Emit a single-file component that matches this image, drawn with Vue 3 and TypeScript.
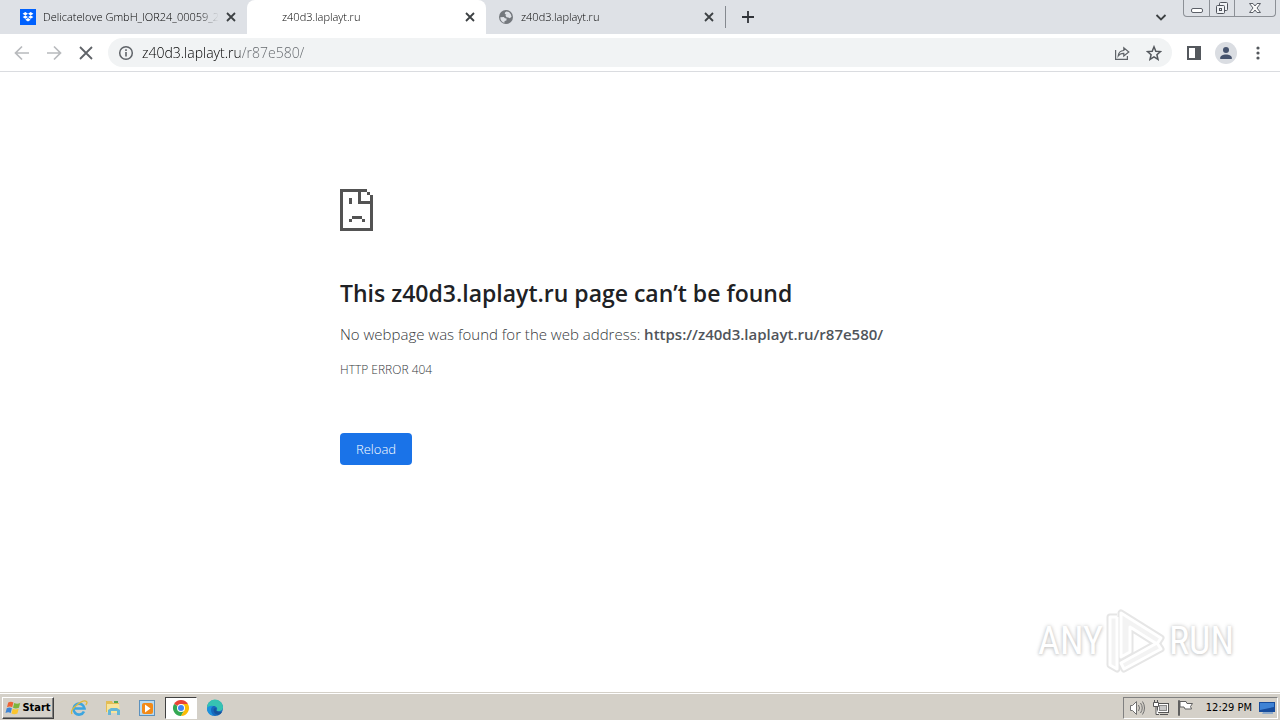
<script setup lang="ts">
import { ref } from 'vue'

interface Tab {
  title: string
  icon: 'dropbox' | 'globe' | 'none'
  active: boolean
}

const tabs: Tab[] = [
  { title: 'Delicatelove GmbH_IOR24_00059_2', icon: 'dropbox', active: false },
  { title: 'z40d3.laplayt.ru', icon: 'none', active: true },
  { title: 'z40d3.laplayt.ru', icon: 'globe', active: false },
]

const address = ref('z40d3.laplayt.ru/r87e580/')
</script>

<template>
  <div class="screen">
    <header class="strip">
      <nav class="tabs" aria-label="Tabs">
        <div v-for="(tab, i) in tabs" :key="i" class="tab" :class="{ active: tab.active }">
          <svg v-if="tab.icon === 'dropbox'" class="favicon" viewBox="0 0 16 16">
            <rect width="16" height="16" fill="#0061fe" />
            <path fill="#fff" d="M5.3 3 8 4.7 5.3 6.4 2.6 4.7zM10.7 3l2.7 1.7-2.7 1.7L8 4.7zM5.3 6.4 8 8.1 5.3 9.8 2.6 8.1zM10.7 6.4l2.7 1.7-2.7 1.7L8 8.1zM8 9l2.7 1.8L8 12.6l-2.7-1.8z" />
          </svg>
          <svg v-else-if="tab.icon === 'globe'" class="favicon" viewBox="0 0 16 16">
            <circle cx="8" cy="8" r="7" fill="#74787d" />
            <path fill="#dee1e6" d="M2.3 8.2 5.8 8 7 9.2l1.6.2-.2 2-1.8.6-.2 1.8C4 13.2 2.2 11 2.3 8.2zM8.4 2.4 11 3l1.8 2.2.8 2.6-1.8 1.4-1.6-.8-1.6-.2-1.2-1.6 1-.9-1.6-.6.2-1.5z" />
          </svg>
          <span v-else class="favicon"></span>
          <span class="title">{{ tab.title }}</span>
          <button class="close" aria-label="Close tab">
            <svg viewBox="0 0 16 16"><path d="m4 4 8 8m0-8-8 8" stroke="#3c4043" stroke-width="1.8" /></svg>
          </button>
        </div>
      </nav>
      <button class="new-tab" aria-label="New tab">
        <svg viewBox="0 0 16 16"><path d="M8 2v12M2 8h12" stroke="#303338" stroke-width="1.8" /></svg>
      </button>
      <button class="search-tabs" aria-label="Search tabs">
        <svg viewBox="0 0 16 16"><path d="M3.5 6 8 10.5 12.5 6" fill="none" stroke="#3c4043" stroke-width="1.8" /></svg>
      </button>
      <div class="window-controls">
        <button aria-label="Minimize">
          <svg viewBox="0 0 16 16"><rect x="2.5" y="8.5" width="11" height="4" rx="1.5" fill="#fff" stroke="#5c6068" /></svg>
        </button>
        <button aria-label="Restore">
          <svg viewBox="0 0 16 16" fill="#f0f2f5" stroke="#50545c">
            <rect x="5.5" y="2.5" width="8" height="8" rx="1" />
            <rect x="2.5" y="5.5" width="8" height="8" rx="1" />
            <rect x="5.5" y="8.5" width="2" height="2" />
          </svg>
        </button>
        <button aria-label="Close">
          <svg viewBox="0 0 16 16"><path d="M2.5 3.5H6L8 6l2-2.500h3.500L10 8l3.500 4.500H10L8 10l-2 2.500H2.500L6 8z" fill="#fafafa" stroke="#5c6068" /></svg>
        </button>
      </div>
    </header>

    <div class="toolbar">
      <button class="nav" aria-label="Back">
        <svg viewBox="0 0 16 16"><path d="M15 8H2M8 1.500 1.500 8 8 14.500" fill="none" stroke="#b8babd" stroke-width="1.7" /></svg>
      </button>
      <button class="nav" aria-label="Forward">
        <svg viewBox="0 0 16 16"><path d="M1 8h13M8 1.500 14.500 8 8 14.500" fill="none" stroke="#b8babd" stroke-width="1.7" /></svg>
      </button>
      <button class="nav" aria-label="Stop loading">
        <svg viewBox="0 0 16 16"><path d="m2 2 12 12m0-12L2 14" stroke="#5f6368" stroke-width="1.8" /></svg>
      </button>
      <div class="omnibox">
        <button class="inner" aria-label="Site information">
          <svg viewBox="0 0 16 16"><circle cx="8" cy="8" r="6.3" fill="none" stroke="#5f6368" stroke-width="1.5" /><path d="M8 7v4.500M8 4.200v1.700" stroke="#5f6368" stroke-width="1.6" /></svg>
        </button>
        <input v-model="address" class="address" type="text" aria-label="Address" spellcheck="false" />
        <button class="inner" aria-label="Share">
          <svg viewBox="0 0 16 16" fill="none" stroke="#5f6368" stroke-width="1.2"><path d="M1.600 5v9.400h11.800V11" /><path d="M4.200 11c.3-3.500 2-5.300 5.600-5.500V2.700L14.800 7l-5 4V8.300C7.300 8.200 5.600 9 4.200 11z" /></svg>
        </button>
        <button class="inner" aria-label="Bookmark this page">
          <svg viewBox="0 0 16 16"><path d="m8 1.800 1.800 4.400 4.700.4-3.600 3.100 1.100 4.600L8 11.800l-4 2.500 1.100-4.600L1.500 6.600l4.700-.4z" fill="none" stroke="#54585d" stroke-width="1.5" /></svg>
        </button>
      </div>
      <button class="tool" aria-label="Side panel">
        <svg viewBox="0 0 16 16"><path d="M1 1h14v14H1zM3 3v10h6V3z" fill="#54585d" fill-rule="evenodd" /></svg>
      </button>
      <button class="tool profile" aria-label="Profile">
        <svg viewBox="0 0 16 16" fill="#46536d"><circle cx="8" cy="5" r="3" /><path d="M2 13.500c0-5.500 12-5.500 12 0v.5H2z" /></svg>
      </button>
      <button class="tool" aria-label="Menu">
        <svg viewBox="0 0 16 16" fill="#54585d"><circle cx="8" cy="3" r="1.6" /><circle cx="8" cy="8" r="1.6" /><circle cx="8" cy="13" r="1.6" /></svg>
      </button>
    </div>

    <main class="page">
      <section class="error">
        <svg class="sad" viewBox="0 0 33 42" fill="#535353" shape-rendering="crispEdges">
          <path d="M0 0h27v3H3v36h27V15H18V3h3v9h9V9h3v33H0zM27 3h3v3h-3zM30 6h3v3h-3zM9 9h3v6H9zM12 27h10v3H12zM9 30h3v3H9zM22 30h3v3h-3z" />
        </svg>
        <h1>This z40d3.laplayt.ru page can’t be found</h1>
        <p class="detail">No webpage was found for the web address: <strong>https://z40d3.laplayt.ru/r87e580/</strong></p>
        <p class="code">HTTP ERROR 404</p>
        <button class="reload">Reload</button>
      </section>

      <div class="watermark">
        <span>ANY</span>
        <svg viewBox="0 0 60 64" fill="none" stroke-linejoin="round">
          <g stroke="#e6e6e6" stroke-width="7">
            <path d="M11 8H4v48l7 4V8" /><path d="M15 4v44l9-5V18l27 17 4-6z" /><path d="m15 54 36-20 4 6-37 20z" />
          </g>
          <g stroke="#fff" fill="#f3f3f3" stroke-width="3">
            <path d="M11 8H4v48l7 4V8" /><path d="M15 4v44l9-5V18l27 17 4-6z" /><path d="m15 54 36-20 4 6-37 20z" />
          </g>
        </svg>
        <span>RUN</span>
      </div>
    </main>

    <footer class="taskbar">
      <button class="start">
        <svg viewBox="0 0 16 16">
          <path d="M3.200 2.500c2-1 3.500-1 5.200 0L7.200 7.300c-1.700-1-3.200-1-5.200 0z" fill="#ed6335" />
          <path d="M9.200 3c2 1 3.700 1 6 0l-1.300 4.800c-2.200 1-4 1-5.900 0z" fill="#7db53c" />
          <path d="M1.700 8.200c2-1 3.600-1 5.200 0L5.700 13c-1.700-1-3.200-1-5.200 0z" fill="#3d85d6" />
          <path d="M7.700 8.700c2 1 3.700 1 6 0l-1.300 4.800c-2.200 1-4 1-5.900 0z" fill="#fbc52e" />
        </svg>
        Start
      </button>
      <div class="launch">
        <button aria-label="Internet Explorer">
          <svg viewBox="0 0 18 18" fill="none"><path d="M14 12.500A5.500 5.500 0 1 1 14.500 9.500H5" stroke="#3da5df" stroke-width="2.6" /><path d="M2 15C-1 10 13 0 16.500 2.500c1 .8.300 2.200-.7 3.500" stroke="#dfb83a" stroke-width="1.3" /></svg>
        </button>
        <button aria-label="File Explorer">
          <svg viewBox="0 0 18 18"><path d="M2 2h6l1 2h6v9H2z" fill="#e3bd55" /><path d="M3 5h12l1 9H3z" fill="#f8e49b" /><path d="M4 16v-5l3-2h6l3 2v5h-3v-4H7v4z" fill="#65b6d6" /><path d="M10 3h4" stroke="#56a64f" stroke-width="2" /></svg>
        </button>
        <button aria-label="Media Player">
          <svg viewBox="0 0 18 18"><rect x="1.5" y="1.5" width="15" height="15" fill="#b8daf1" stroke="#5c91bd" /><rect x="4" y="4" width="11" height="11" rx="2" fill="#f28a18" /><path d="m7 5.500 5.500 4L7 13.500z" fill="#fff" /></svg>
        </button>
        <button class="current" aria-label="Chrome">
          <svg viewBox="0 0 18 18"><path d="M9 9 2.070 5A8 8 0 0 1 15.930 5z" fill="#ea4335" /><path d="M9 9 2.070 5A8 8 0 0 0 9 17l3-5z" fill="#34a853" /><path d="M9 9V5h6.930A8 8 0 0 1 9 17l3.400-6z" fill="#fbbc05" /><circle cx="9" cy="9" r="4" fill="#fff" /><circle cx="9" cy="9" r="3" fill="#4285f4" /></svg>
        </button>
        <button aria-label="Edge">
          <svg viewBox="0 0 18 18"><circle cx="9" cy="9" r="8" fill="#1769bd" /><path d="M1 9a8 8 0 0 1 16-1c.3 4-4.500 5-6.500 3.500 2-2-.5-5-3.500-4.500-3 .3-5 2-6 2z" fill="#36c3b2" /><path d="M7 7c-3 2-2.500 7 1 9.500C4 17 .5 13 1 9c1.500-2 4-2.500 6-2z" fill="#1e91dc" /><path d="M10.500 9c-2 1.500 0 4.500 5.500 4-1 2-3 3-5 2.500-3-.7-4-4-3-6z" fill="#17549b" /></svg>
        </button>
      </div>
      <div class="tray">
        <button aria-label="Volume">
          <svg viewBox="0 0 18 18" fill="none" stroke="#707070"><path d="M2.500 6.500h2l4-4v13l-4-4h-2z" fill="#fff" /><path d="M10.500 6q2 3 0 6M12.500 4q3.500 5 0 10M14.500 2.500q4 6.500 0 13" /></svg>
        </button>
        <button aria-label="Network">
          <svg viewBox="0 0 18 18" stroke="#555" fill="#fff"><rect x="5.5" y="4.5" width="11" height="9" /><rect x="7.5" y="6.5" width="7" height="5" fill="#c8c8c8" stroke="#888" /><path d="M8 15.500h8M2.500 1v3M5.500 1v3M1.500 3.500h5v4h-5zM4 8v7.500h3" /></svg>
        </button>
        <button aria-label="Action Center">
          <svg viewBox="0 0 18 18" stroke="#606060" fill="#fff"><path d="M2.500 1.500v15h1v-15zM4 2.500h6l1 2h5.500l-2 3 1 2.500H9l-1-2H4z" /></svg>
        </button>
        <time>12:29 PM</time>
        <button aria-label="Show desktop">
          <svg viewBox="0 0 18 18"><path d="M1 3h16v10H1z" fill="#174c9c" /><path d="M2 4h14v4L2 11z" fill="#3f83d5" /><path d="M5 13h10v2H4z" fill="#8daacb" /></svg>
        </button>
      </div>
    </footer>
  </div>
</template>

<style>
body {
  margin: 0;
}
</style>

<style scoped>
* {
  box-sizing: border-box;
}
.screen {
  display: flex;
  flex-direction: column;
  min-height: 100vh;
  background: #fff;
  font-family: "DejaVu Sans Condensed", "Noto Sans", sans-serif;
  color: #3c4043;
}
button {
  display: flex;
  align-items: center;
  justify-content: center;
  flex: none;
  padding: 0;
  border: 0;
  background: none;
  font: inherit;
  color: inherit;
}
svg {
  display: block;
  flex: none;
  width: 16px;
  height: 16px;
}
.strip {
  display: flex;
  height: 34px;
  background: #dee1e6;
}
.tabs {
  display: flex;
  flex: 0 1 726px;
  min-width: 0;
  border-right: 1px solid #85898f;
  border-image: linear-gradient(transparent 7px, #85898f 7px, #85898f 27px, transparent 27px) 1;
}
.tab {
  display: flex;
  align-items: center;
  flex: 1 1 0;
  min-width: 0;
  padding: 0 8px 0 12px;
  color: #000;
  font-family: "Open Sans", "Noto Sans", sans-serif;
  font-size: 11px;
  font-weight: 300;
}
.tab:first-child {
  flex-basis: 8px;
  padding-left: 20px;
}
.tab.active {
  border-radius: 8px 8px 0 0;
  background: #fff;
}
.favicon {
  flex: none;
  width: 16px;
  height: 16px;
}
.title {
  flex: 1;
  min-width: 0;
  margin: 0 4px 0 7px;
  overflow: hidden;
  white-space: nowrap;
  line-height: 18px;
  mask-image: linear-gradient(to left, transparent, #000 20px);
}
.new-tab {
  width: 44px;
}
.search-tabs {
  width: 28px;
  margin-left: auto;
}
.window-controls {
  display: flex;
  height: 17px;
  margin: 0 4px 0 8px;
  border: 1px solid #8c9096;
  border-top: 0;
  border-radius: 0 0 4px 4px;
}
.window-controls button {
  width: 25px;
}
.window-controls button + button {
  border-left: 1px solid #8c9096;
}
.window-controls button:last-child {
  width: 41px;
}
.toolbar {
  display: flex;
  align-items: center;
  height: 38px;
  padding: 0 6px;
  border-bottom: 1px solid #dadce0;
}
.nav {
  width: 32px;
  height: 32px;
}
.omnibox {
  display: flex;
  align-items: center;
  flex: 1;
  min-width: 0;
  height: 29px;
  margin: 0 6px;
  padding: 0 2px;
  border-radius: 15px;
  background: #f1f3f4;
}
.inner {
  width: 32px;
  height: 28px;
}
.address {
  flex: 1;
  min-width: 0;
  height: 28px;
  padding: 0;
  border: 0;
  outline: 0;
  background: linear-gradient(to right, #000 7em, #5f6368 7em);
  background-clip: text;
  color: transparent;
  caret-color: #202124;
  font: 300 14px/28px "Open Sans", "Noto Sans", sans-serif;
}
.tool {
  width: 32px;
  height: 32px;
}
.profile svg {
  width: 22px;
  height: 22px;
  padding: 3px;
  border-radius: 50%;
  background: #dadde2;
}
.page {
  display: flex;
  flex-direction: column;
  justify-content: space-between;
  flex: 1;
}
.error {
  width: 100%;
  max-width: 600px;
  margin: 0 auto;
  padding-top: 117px;
  color: #36393c;
  font-family: "Open Sans", "Noto Sans", sans-serif;
  font-weight: 300;
}
.sad {
  width: 33px;
  height: 42px;
}
h1 {
  margin: 48px 0 0;
  color: #202124;
  font-size: 23px;
  font-weight: 600;
  line-height: 28px;
}
.detail {
  margin: 15px 0 0;
  font-size: 15px;
  line-height: 24px;
}
.detail strong {
  color: #50545a;
  font-weight: 600;
}
.code {
  margin: 15px 0 0;
  font-size: 12px;
  line-height: 18px;
}
.reload {
  height: 32px;
  margin-top: 54px;
  padding: 0 16px;
  border-radius: 4px;
  background: #1a73e8;
  color: #fff;
  font-size: 13px;
}
.watermark {
  display: flex;
  align-items: center;
  align-self: flex-end;
  gap: 3px;
  margin: 0 46px 19px 0;
  color: #fff;
  font: 38px/64px "Liberation Sans Narrow", "Roboto Condensed", Roboto, sans-serif;
  text-shadow: 0 0 4px #c8c8c8, 0 1px 3px #d0d0d0;
}
.watermark svg {
  width: 60px;
  height: 64px;
}
.taskbar {
  display: flex;
  align-items: center;
  height: 28px;
  padding: 2px 2px 0;
  border-top: 1px solid #d4d0c8;
  background: #d4d0c8;
  box-shadow: inset 0 1px #fff;
}
.start {
  gap: 1px;
  width: 52px;
  height: 22px;
  border: 1px solid;
  border-color: #fff #404040 #404040 #fff;
  box-shadow: inset -1px -1px #808080;
  color: #000;
  font-size: 11px;
  font-weight: 700;
}
.launch {
  display: flex;
  gap: 2px;
  margin-left: 9px;
}
.launch button {
  width: 32px;
  height: 22px;
}
.launch svg,
.tray svg {
  width: 18px;
  height: 18px;
}
.launch .current {
  border: 1px solid;
  border-color: #404040 #fff #fff #404040;
  background: #fff;
}
.tray {
  display: flex;
  align-items: center;
  gap: 6px;
  height: 22px;
  margin-left: auto;
  padding: 0 1px 0 4px;
  border: 1px solid;
  border-color: #808080 #fff #fff #808080;
  color: #000;
  font-size: 11px;
}
.tray time {
  margin-left: 6px;
}
</style>
